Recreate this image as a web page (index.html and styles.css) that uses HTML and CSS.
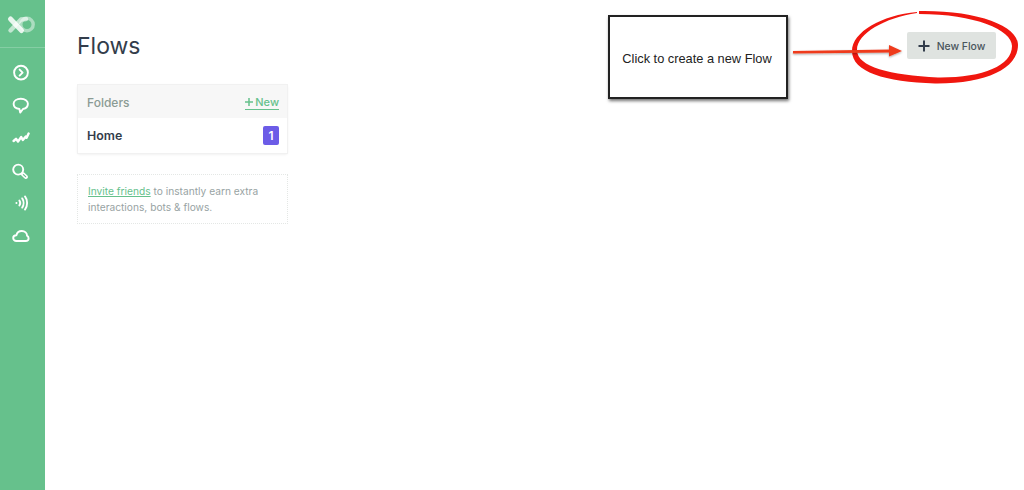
FILE: index.html
```html
<!DOCTYPE html>
<html lang="en">
<head>
    <meta charset="UTF-8">
    <title>Flows</title>
    <link rel="stylesheet" href="styles.css">
</head>
<body>
    <nav class="sidebar">
        <div class="logo">
            <svg width="30" height="24" viewBox="0 0 30 24" fill="none">
                <circle cx="22" cy="12.5" r="6.2" stroke="#fff" stroke-opacity="0.45" stroke-width="3.4"/>
                <path d="M5.5 7 L16.5 18.5" stroke="#fff" stroke-opacity="0.85" stroke-width="5" stroke-linecap="round"/>
                <path d="M5.5 18.5 L16 7.5 L21 7" stroke="#fff" stroke-opacity="0.6" stroke-width="4.4" stroke-linecap="round" stroke-linejoin="round"/>
            </svg>
        </div>
        <ul class="menu">
            <li><svg width="18" height="18" viewBox="0 0 18 18" fill="none"><circle cx="9" cy="8.6" r="6.9"/><path d="M7.6 5.6 L10.6 8.6 L7.6 11.6"/></svg></li>
            <li><svg width="18" height="18" viewBox="0 0 18 18" fill="none"><path d="M8.8 1.8 C13 1.8 15.9 3.8 15.9 6.8 C15.9 9.8 13.4 11.6 11 12 L8.2 15.6 L7.4 12 C4.2 11.6 1.6 9.8 1.6 6.8 C1.6 3.8 4.6 1.8 8.8 1.8 Z"/></svg></li>
            <li><svg width="18" height="18" viewBox="0 0 18 18" fill="none"><path d="M1.6 12 L4 9.8 L6 12.6 L9.2 8 L10.8 11 L13.8 7.4 L14.6 8.8 L16.6 4.6" stroke-width="2.4"/></svg></li>
            <li><svg width="18" height="18" viewBox="0 0 18 18" fill="none"><circle cx="6.2" cy="7.6" r="5"/><path d="M10.8 12 L14 15" stroke-width="4"/><path d="M11.4 12.6 L13.6 14.6" stroke="#66c18c" stroke-width="1.2"/></svg></li>
            <li><svg width="18" height="18" viewBox="0 0 18 18" fill="none"><path d="M4.4 9 L4.5 9"/><path d="M7.4 6.6 C8.4 8 8.4 10 7.4 11.4"/><path d="M10.2 4.4 C12 7 12 11 10.2 13.6"/><path d="M13 2.4 C15.8 6 15.8 12 13 15.6"/></svg></li>
            <li><svg width="18" height="18" viewBox="0 0 18 18" fill="none"><path d="M4.4 14 C2.4 14 1.2 12.6 1.2 11 C1.2 9.3 2.6 8.2 4.4 8.2 C5 5.6 7.4 4 9.8 4 C13 4 15 6.2 15 8.6 C16 9.2 16.6 10.2 16.6 11.2 C16.6 12.8 15.2 14 13.6 14 Z"/></svg></li>
        </ul>
    </nav>

    <main class="content">
        <header class="topbar">
            <h1>Flows</h1>
            <button class="new-flow">
                <svg class="plus" width="12" height="12" viewBox="0 0 12 12"><path d="M6 0.5 V11.5 M0.5 6 H11.5" stroke="#333d4b" stroke-width="2"/></svg>
                <span class="new-flow-label">New Flow</span>
            </button>
        </header>

        <section class="folders">
            <div class="folders-head">
                <span>Folders</span>
                <a class="new-link">
                    <svg class="new-plus" width="8" height="8" viewBox="0 0 8 8"><path d="M4 0 V8 M0 4 H8" stroke="#66c18c" stroke-width="1.5"/></svg>New</a>
            </div>
            <div class="folder-row">
                <span>Home</span>
                <span class="badge">1</span>
            </div>
        </section>

        <p class="invite"><a>Invite friends</a> to instantly earn extra interactions, bots &amp; flows.</p>
    </main>

    <div class="callout">Click to create a new Flow</div>

    <svg class="markup" width="1024" height="490" viewBox="0 0 1024 490">
        <defs>
            <filter id="soft" x="-10%" y="-50%" width="120%" height="200%">
                <feDropShadow dx="0" dy="1" stdDeviation="0.8" flood-color="#000" flood-opacity="0.35"/>
            </filter>
        </defs>
        <path d="M919 11 C975 10 1018 25 1018 45 C1018 69 985 84 935 83.5 C885 82 852 72 852 51 C852 32 882 15 917 12 L917 13 C885 18 857 33 857 50 C857 67 890 75 938 77.5 C982 78 1012 66 1012 46 C1012 30 975 14 919 14 Z" fill="#f0170f"/>
        <g filter="url(#soft)">
            <path d="M793 51 L891 49.6 L891 52.6 L793 53.6 Z" fill="#ef3a1c"/>
            <path d="M889 45 L902 51 L889 56.5 Z" fill="#ef3a1c"/>
        </g>
    </svg>
</body>
</html>
```

FILE: styles.css
```css
body {
    font-family: Inter, "Liberation Sans", sans-serif;
    background-color: #fff;
    margin: 0;
    padding: 0;
    height: 490px;
    overflow: hidden;
    display: flex;
    color: #333d4b;
}
.sidebar {
    width: 45px;
    flex: none;
    background-color: #66c18c;
}
.logo {
    height: 47px;
    display: flex;
    align-items: center;
    padding-left: 5px;
    border-bottom: 1px solid #85cea4;
}
.menu {
    list-style: none;
    margin: 0;
    padding: 16px 0 0 0;
    display: flex;
    flex-direction: column;
    gap: 14.6px;
}
.menu li {
    height: 18px;
    padding-left: 12px;
}
.menu svg {
    stroke: #fff;
    stroke-width: 1.9;
    stroke-linecap: round;
    stroke-linejoin: round;
}
.content {
    flex: 1;
    padding: 32px 28px 0 32px;
}
.topbar {
    display: flex;
    justify-content: space-between;
    align-items: flex-start;
    height: 53px;
}
h1 {
    margin: 0;
    font-size: 23px;
    line-height: 28px;
    font-weight: 400;
}
.new-flow {
    height: 27px;
    width: 89px;
    border: none;
    border-radius: 2px;
    background-color: #dfe3e0;
    color: #4a555c;
    font-family: inherit;
    font-size: 10.4px;
    font-weight: 500;
    padding: 0;
    display: flex;
    align-items: center;
    justify-content: center;
}
.plus {
    margin-right: 7px;
}
.new-flow-label {
    padding-top: 1px;
}
.folders {
    width: 209px;
    margin-left: 1px;
    box-shadow: 0 0 0 1px #f1f1f1, 0 1px 3px rgba(0,0,0,0.1);
    font-size: 12.4px;
}
.folders-head {
    height: 33px;
    padding: 1px 8px 0 9px;
    box-sizing: border-box;
    background-color: #f7f7f7;
    display: flex;
    justify-content: space-between;
    align-items: center;
    color: #8b9b94;
    font-weight: 500;
    font-size: 12px;
}
.new-link {
    color: #66c18c;
    font-size: 11px;
    border-bottom: 1px solid #66c18c;
    line-height: 14px;
    display: flex;
    align-items: center;
}
.new-plus {
    margin-right: 2px;
}
.folder-row {
    height: 35px;
    padding: 0 8px 1px 9px;
    box-sizing: border-box;
    display: flex;
    justify-content: space-between;
    align-items: center;
    font-weight: 600;
}
.badge {
    width: 16px;
    height: 19px;
    border-radius: 2px;
    background-color: #6c5ce7;
    color: #fff;
    font-size: 12px;
    text-align: center;
    line-height: 19px;
}
.invite {
    margin: 21px 0 0 0;
    padding: 8px 5px 9px 10px;
    box-sizing: border-box;
    width: 211px;
    height: 50px;
    border: 1px dotted #e4e7e5;
    color: #98a3a3;
    font-size: 10.2px;
    line-height: 16px;
}
.invite a {
    color: #66c18c;
    text-decoration: underline;
}
.callout {
    position: absolute;
    left: 608px;
    top: 15px;
    width: 180px;
    height: 84px;
    box-sizing: border-box;
    border: 2.5px solid #222;
    box-shadow: 1px 2px 3px rgba(0,0,0,0.55);
    background-color: #fff;
    color: #222;
    font-family: "Liberation Sans", Arial, sans-serif;
    font-size: 12.8px;
    padding: 2px 2px 0 0;
    display: flex;
    align-items: center;
    justify-content: center;
}
.markup {
    position: absolute;
    left: 0;
    top: 0;
    pointer-events: none;
}
```
